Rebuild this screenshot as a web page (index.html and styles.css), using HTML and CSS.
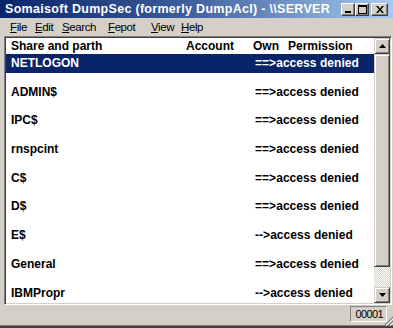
FILE: index.html
```html
<!DOCTYPE html>
<html>
<head>
<meta charset="utf-8">
<link rel="stylesheet" href="styles.css">
</head>
<body>
<div class="window">
  <div class="titlebar">
    <span class="title">Somaisoft DumpSec (formerly DumpAcl) - \\SERVER</span>
    <div class="tbtns">
      <div class="tbtn min"><svg width="8" height="8" viewBox="0 0 8 8"><rect x="1" y="6" width="6" height="2" fill="#000"/></svg></div>
      <div class="tbtn max"><svg width="9" height="9" viewBox="0 0 9 9"><path d="M0 0H9V9H0Z M1 2V8H8V2Z" fill="#000" fill-rule="evenodd"/></svg></div>
      <div class="tbtn close"><svg width="8" height="7" viewBox="0 0 8 7"><path d="M0 0h2l2 2.5 2-2.5h2l-3 3.5 3 3.5h-2l-2-2.5-2 2.5h-2l3-3.5z" fill="#000"/></svg></div>
    </div>
  </div>
  <div class="menubar">
    <span class="mi w-file"><u>F</u>ile</span>
    <span class="mi w-edit"><u>E</u>dit</span>
    <span class="mi w-search"><u>S</u>earch</span>
    <span class="mi w-fepot"><u>F</u>epot</span>
    <span class="mi w-view"><u>V</u>iew</span>
    <span class="mi w-help"><u>H</u>elp</span>
  </div>
  <div class="client">
    <div class="listbox">
      <div class="listview">
        <div class="header cols">
          <span>Share and parth</span><span>Account</span><span>Own</span><span>Permission</span>
        </div>
        <div class="row"><div class="line cols sel"><span>NETLOGON</span><span></span><span class="perm">==&gt;access denied</span></div></div>
        <div class="row"><div class="line cols"><span>ADMIN$</span><span></span><span class="perm">==&gt;access denied</span></div></div>
        <div class="row"><div class="line cols"><span>IPC$</span><span></span><span class="perm">==&gt;access denied</span></div></div>
        <div class="row"><div class="line cols"><span>rnspcint</span><span></span><span class="perm">==&gt;access denied</span></div></div>
        <div class="row"><div class="line cols"><span>C$</span><span></span><span class="perm">==&gt;access denied</span></div></div>
        <div class="row"><div class="line cols"><span>D$</span><span></span><span class="perm">==&gt;access denied</span></div></div>
        <div class="row"><div class="line cols"><span>E$</span><span></span><span class="perm">--&gt;access denied</span></div></div>
        <div class="row"><div class="line cols"><span>General</span><span></span><span class="perm">==&gt;access denied</span></div></div>
        <div class="row"><div class="line cols"><span>IBMPropr</span><span></span><span class="perm">--&gt;access denied</span></div></div>
      </div>
      <div class="vscroll">
        <div class="sbtn"><svg width="7" height="4" viewBox="0 0 7 4"><path d="M3.5 0L7 4H0Z" fill="#000"/></svg></div>
        <div class="thumb"></div>
        <div class="track"></div>
        <div class="sbtn"><svg width="7" height="4" viewBox="0 0 7 4"><path d="M0 0H7L3.5 4Z" fill="#000"/></svg></div>
      </div>
    </div>
  </div>
  <div class="statusbar">
    <div class="panel">00001</div>
    <div class="grip"><svg width="10" height="10" viewBox="0 0 10 10"><path d="M10 0L0 10M10 4L4 10M10 8L8 10" stroke="#808080" stroke-width="1.2"/><path d="M10 2L2 10M10 6L6 10" stroke="#fff" stroke-width="0.8"/></svg></div>
  </div>
</div>
</body>
</html>
```

FILE: styles.css
```css
* { box-sizing: border-box; }
html, body { margin: 0; padding: 0; }
body {
  width: 393px;
  height: 328px;
  overflow: hidden;
  background: #d4d0c8;
  font-family: "Liberation Sans", Arial, sans-serif;
}
.window {
  width: 393px;
  height: 328px;
  display: flex;
  flex-direction: column;
  background: #d4d0c8;
  border-bottom: 2px solid #404040;
  box-shadow: inset 0 -1px 0 #808080;
}
.titlebar {
  height: 18px;
  flex: none;
  display: flex;
  align-items: center;
  justify-content: space-between;
  padding-left: 5px;
  padding-right: 5px;
  background: linear-gradient(to right, #0a246a 0%, #3a5a98 45%, #a6caf0 100%);
}
.title {
  color: #fff;
  font-weight: bold;
  font-size: 12.5px;
  letter-spacing: 0.3px;
  white-space: nowrap;
}
.tbtns {
  display: flex;
  align-items: center;
}
.tbtn {
  width: 14px;
  height: 13px;
  background: #d4d0c8;
  border-top: 1px solid #fff;
  border-left: 1px solid #fff;
  border-right: 1px solid #404040;
  border-bottom: 1px solid #404040;
  box-shadow: inset -1px -1px 0 #808080;
  display: flex;
  align-items: center;
  justify-content: center;
}
.tbtn svg { display: block; }
.tbtn.close { width: 17px; margin-left: 2px; }
.menubar {
  height: 18px;
  flex: none;
  display: flex;
  align-items: center;
  padding-left: 10px;
  font-size: 11.5px;
  letter-spacing: -0.4px;
  color: #000;
}
.mi { display: inline-block; white-space: nowrap; }
.mi u { text-decoration-thickness: 1px; text-underline-offset: 1px; }
.w-file { width: 25px; }
.w-edit { width: 27px; }
.w-search { width: 46px; }
.w-fepot { width: 43px; }
.w-view { width: 30px; }
.w-help { width: 30px; }
.client {
  height: 269px;
  flex: none;
  padding-left: 4px;
  padding-right: 1px;
}
.listbox {
  height: 269px;
  display: flex;
  background: #fff;
  border-top: 1px solid #808080;
  border-left: 1px solid #808080;
  border-right: 1px solid #fff;
  border-bottom: 1px solid #fff;
  box-shadow: inset 1px 1px 0 #404040, inset -1px -1px 0 #d4d0c8;
  padding: 1px;
}
.listview {
  flex: 1;
  overflow: hidden;
  background: #fff;
  font-size: 12px;
  font-weight: bold;
  color: #000;
}
.cols {
  display: grid;
  grid-template-columns: 175px 67px 35px 1fr;
  padding-left: 5px;
  white-space: nowrap;
}
.header {
  height: 16px;
  line-height: 16px;
}
.row {
  height: 28.7px;
}
.line {
  height: 19px;
  line-height: 19px;
}
.line.sel {
  background: #0a246a;
  color: #fff;
}
.perm {
  margin-left: 2px;
  letter-spacing: 0.05px;
}
.vscroll {
  width: 16px;
  flex: none;
  display: flex;
  flex-direction: column;
}
.sbtn {
  height: 16px;
  flex: none;
  background: #d4d0c8;
  border-top: 1px solid #d4d0c8;
  border-left: 1px solid #d4d0c8;
  border-right: 1px solid #404040;
  border-bottom: 1px solid #404040;
  box-shadow: inset 1px 1px 0 #fff, inset -1px -1px 0 #808080;
  display: flex;
  align-items: center;
  justify-content: center;
}
.sbtn svg { display: block; }
.thumb {
  height: 213px;
  flex: none;
  background: #d4d0c8;
  border-top: 1px solid #d4d0c8;
  border-left: 1px solid #d4d0c8;
  border-right: 1px solid #404040;
  border-bottom: 1px solid #404040;
  box-shadow: inset 1px 1px 0 #fff, inset -1px -1px 0 #808080;
}
.track {
  flex: 1;
  background: repeating-conic-gradient(#fff 0 25%, #d4d0c8 0 50%) 0 0 / 2px 2px;
}
.statusbar {
  flex: 1;
  display: flex;
  justify-content: flex-end;
  align-items: flex-start;
  padding-top: 1px;
}
.panel {
  width: 37px;
  height: 16px;
  border-top: 1px solid #808080;
  border-left: 1px solid #808080;
  border-right: 1px solid #fff;
  border-bottom: 1px solid #fff;
  font-size: 11px;
  line-height: 14px;
  letter-spacing: -0.6px;
  text-align: right;
  padding-right: 3px;
  color: #000;
}
.grip {
  width: 6px;
  height: 10px;
  margin-top: 10px;
}
.grip svg { display: block; margin-left: -3px; }
```
